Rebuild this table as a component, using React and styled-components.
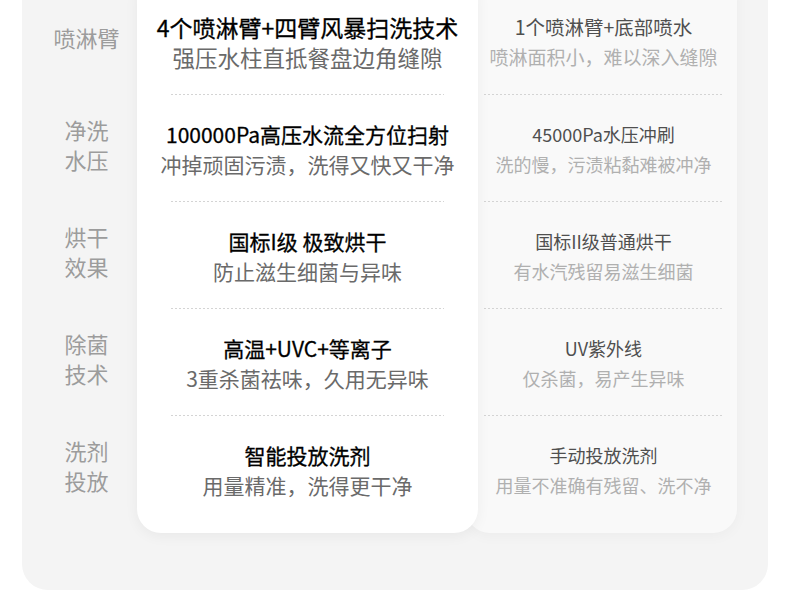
import React from 'react';
import styled, { createGlobalStyle } from 'styled-components';

const ROW = 107;

const GlobalStyle = createGlobalStyle`
  html, body {
    margin: 0;
    background: #fff;
  }
  body {
    font-family: "Noto Sans CJK SC", "Noto Sans", sans-serif;
    overflow: hidden;
  }
`;

const Page = styled.div`
  width: 790px;
  height: 611px;
  overflow: hidden;
  padding: 0 22px;
  box-sizing: border-box;
`;

const Panel = styled.div`
  margin-top: -12px;
  display: flex;
  align-items: flex-start;
  background: #f4f4f4;
  border-radius: 0 0 26px 26px;
  padding: 0 31px 57px 0;
`;

const LabelColumn = styled.div`
  width: 115px;
  flex: none;
  box-sizing: border-box;
  padding-left: 14px;
`;

const Label = styled.div`
  height: ${ROW}px;
  box-sizing: border-box;
  padding-bottom: 10px;
  display: flex;
  align-items: center;
  justify-content: center;
  text-align: center;
  font-size: 22px;
  line-height: 30px;
  color: #9c9c9c;
`;

const OurCard = styled.div`
  position: relative;
  z-index: 1;
  width: 341px;
  flex: none;
  box-sizing: border-box;
  background: #fff;
  border-radius: 0 0 24px 24px;
  box-shadow: 0 3px 14px rgba(0, 0, 0, 0.05);
  padding-bottom: 10px;
`;

const TheirCard = styled.div`
  width: 271px;
  flex: none;
  margin-left: -12px;
  box-sizing: border-box;
  padding: 0 14px 10px 18px;
  background: #f9f9f9;
  border-radius: 0 0 24px 24px;
  box-shadow: 0 3px 14px rgba(0, 0, 0, 0.035);
`;

const Row = styled.div`
  height: ${ROW}px;
  display: flex;
  flex-direction: column;
  align-items: center;
  justify-content: center;
  white-space: nowrap;
  line-height: 30px;
  background: ${({ $last }) =>
    $last
      ? 'none'
      : 'linear-gradient(to right, #d4d4d4 50%, transparent 0) left bottom / 4px 1px repeat-x'};
`;

const OurRow = styled(Row)`
  margin: 0 34px;
`;

const OurTitle = styled.div`
  font-size: ${({ $big }) => ($big ? 23 : 21)}px;
  font-weight: 400;
  color: #000;
  -webkit-text-stroke: 0.3px #000;
`;

const OurSub = styled.div`
  font-size: ${({ $big }) => ($big ? 22.5 : 21)}px;
  color: #6a6a6a;
`;

const TheirTitle = styled.div`
  font-size: ${({ $big }) => ($big ? 19.5 : 18)}px;
  font-weight: 400;
  color: #4f4f4f;
`;

const TheirSub = styled.div`
  font-size: ${({ $big }) => ($big ? 19 : 18)}px;
  color: #b0b0b0;
`;

const rows = [
  {
    label: ['喷淋臂'],
    ours: ['4个喷淋臂+四臂风暴扫洗技术', '强压水柱直抵餐盘边角缝隙'],
    theirs: ['1个喷淋臂+底部喷水', '喷淋面积小，难以深入缝隙'],
    big: true,
  },
  {
    label: ['净洗', '水压'],
    ours: ['100000Pa高压水流全方位扫射', '冲掉顽固污渍，洗得又快又干净'],
    theirs: ['45000Pa水压冲刷', '洗的慢，污渍粘黏难被冲净'],
  },
  {
    label: ['烘干', '效果'],
    ours: ['国标I级 极致烘干', '防止滋生细菌与异味'],
    theirs: ['国标II级普通烘干', '有水汽残留易滋生细菌'],
  },
  {
    label: ['除菌', '技术'],
    ours: ['高温+UVC+等离子', '3重杀菌祛味，久用无异味'],
    theirs: ['UV紫外线', '仅杀菌，易产生异味'],
  },
  {
    label: ['洗剂', '投放'],
    ours: ['智能投放洗剂', '用量精准，洗得更干净'],
    theirs: ['手动投放洗剂', '用量不准确有残留、洗不净'],
  },
];

const App = () => (
  <>
    <GlobalStyle />
    <Page>
      <Panel>
        <LabelColumn>
          {rows.map((r, i) => (
            <Label key={i}>
              <div>
                {r.label.map((l) => (
                  <div key={l}>{l}</div>
                ))}
              </div>
            </Label>
          ))}
        </LabelColumn>

        <OurCard>
          {rows.map((r, i) => (
            <OurRow key={i} $last={i === rows.length - 1}>
              <OurTitle $big={r.big}>{r.ours[0]}</OurTitle>
              <OurSub $big={r.big}>{r.ours[1]}</OurSub>
            </OurRow>
          ))}
        </OurCard>

        <TheirCard>
          {rows.map((r, i) => (
            <Row key={i} $last={i === rows.length - 1}>
              <TheirTitle $big={r.big}>{r.theirs[0]}</TheirTitle>
              <TheirSub $big={r.big}>{r.theirs[1]}</TheirSub>
            </Row>
          ))}
        </TheirCard>
      </Panel>
    </Page>
  </>
);

export default App;
